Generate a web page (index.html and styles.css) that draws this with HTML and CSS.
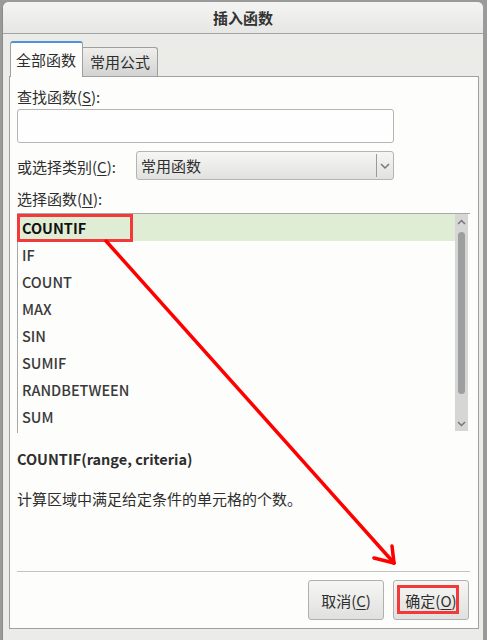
FILE: index.html
```html
<!DOCTYPE html>
<html>
<head>
<meta charset="utf-8">
<link rel="stylesheet" href="styles.css">
</head>
<body>
<div class="dialog">
  <div class="titlebar">插入函数</div>
  <div class="body">
    <div class="tabs">
      <div class="tab active">全部函数</div>
      <div class="tab">常用公式</div>
    </div>
    <div class="panel">
      <div class="label">查找函数(<u>S</u>):</div>
      <div class="input"></div>
      <div class="catrow">
        <div class="label">或选择类别(<u>C</u>):</div>
        <div class="select">
          <span class="seltext">常用函数</span>
          <span class="selbtn">
            <svg width="12" height="8" viewBox="0 0 12 8"><path d="M2 2 L6 6 L10 2" fill="none" stroke="#777" stroke-width="1.5"/></svg>
          </span>
        </div>
      </div>
      <div class="label lab3">选择函数(<u>N</u>):</div>
      <div class="list">
        <div class="rows">
          <div class="row sel">COUNTIF</div>
          <div class="row">IF</div>
          <div class="row">COUNT</div>
          <div class="row">MAX</div>
          <div class="row">SIN</div>
          <div class="row">SUMIF</div>
          <div class="row">RANDBETWEEN</div>
          <div class="row">SUM</div>
        </div>
        <div class="scroll">
          <svg class="sarrow" width="9" height="6" viewBox="0 0 9 6"><path d="M1 5 L4.5 1.5 L8 5" fill="none" stroke="#777" stroke-width="1.5"/></svg>
          <div class="thumb"></div>
          <svg class="sarrow" width="9" height="6" viewBox="0 0 9 6"><path d="M1 1 L4.5 4.5 L8 1" fill="none" stroke="#777" stroke-width="1.5"/></svg>
        </div>
      </div>
      <div class="formula">COUNTIF(range, criteria)</div>
      <div class="desc">计算区域中满足给定条件的单元格的个数。</div>
      <div class="footer">
        <div class="btn">取消(<u>C</u>)</div>
        <div class="btn">确定(<u>O</u>)</div>
      </div>
    </div>
  </div>
</div>
<div class="mark mark1"></div>
<div class="mark mark2"></div>
<svg class="arrow" width="487" height="640" viewBox="0 0 487 640">
  <g stroke="#ff0000" stroke-width="3.5" stroke-linecap="round" fill="none">
    <path d="M106 241 L394 563"/>
    <path d="M374 558 L394 563"/>
    <path d="M392 546 L394 563"/>
  </g>
</svg>
</body>
</html>
```
FILE: styles.css
```css
html, body {
  margin: 0;
  padding: 0;
}
body {
  width: 487px;
  height: 640px;
  background: #9a9a9a;
  position: relative;
  overflow: hidden;
  font-family: "Noto Sans CJK SC", "Noto Sans", sans-serif;
  font-size: 15px;
  color: #2e2e2e;
}
.dialog {
  margin: 2px 3px 0 2px;
  height: 638px;
  background: #ebece8;
  border-radius: 6px 6px 0 0;
  border-left: 1px solid #8a8a8a;
  border-right: 1px solid #9c9c9c;
  box-sizing: border-box;
}
.titlebar {
  height: 31px;
  line-height: 31px;
  text-align: center;
  font-weight: bold;
  font-size: 15px;
  color: #333;
  background: linear-gradient(#f4f5f3, #e6e7e4);
  border-bottom: 1px solid #a4a4a4;
  border-radius: 6px 6px 0 0;
}
.body {
  padding: 7px 6px 0 6px;
}
.tabs {
  display: flex;
  align-items: flex-end;
  height: 35px;
  padding-left: 1px;
}
.tab {
  box-sizing: border-box;
  font-size: 15px;
  color: #2e2e2e;
}
.tab.active {
  width: 73px;
  height: 36px;
  margin-bottom: -1px;
  background: #fdfdfb;
  border: 1px solid #a0a0a0;
  border-top: 2px solid #4e92d8;
  border-bottom: none;
  border-radius: 3px 3px 0 0;
  padding: 6px 0 0 5px;
  position: relative;
  z-index: 2;
}
.tab:not(.active) {
  width: 75px;
  height: 29px;
  background: linear-gradient(#eeeeec, #d3d4d2);
  border: 1px solid #a0a0a0;
  border-bottom: none;
  border-left: none;
  border-radius: 0 3px 0 0;
  padding: 3px 0 0 7px;
}
.panel {
  box-sizing: border-box;
  width: 470px;
  height: 553px;
  background: #fdfdfb;
  border: 1px solid #a0a0a0;
  padding: 10px 7px 8px 7px;
  display: flex;
  flex-direction: column;
}
.label {
  height: 20px;
  line-height: 20px;
}
u {
  text-decoration-thickness: 1px;
  text-underline-offset: 2px;
}
.input {
  margin-top: 2px;
  width: 377px;
  height: 34px;
  box-sizing: border-box;
  border: 1px solid #b4b4b2;
  border-radius: 3px;
  background: #fefefe;
}
.catrow {
  margin-top: 8px;
  display: flex;
  align-items: center;
  height: 29px;
}
.catrow .label {
  width: 119px;
  margin-top: 2px;
}
.select {
  box-sizing: border-box;
  width: 258px;
  height: 29px;
  border: 1px solid #b4b4b2;
  border-radius: 3px;
  background: linear-gradient(#f6f6f4, #e1e2e0);
  display: flex;
  align-items: center;
}
.seltext {
  flex: 1;
  padding-left: 4px;
}
.selbtn {
  width: 16px;
  height: 23px;
  border-left: 1px solid #9a9a9a;
  display: flex;
  align-items: center;
  justify-content: center;
}
.lab3 {
  margin-top: 9px;
}
.list {
  margin-top: 4px;
  width: 453px;
  height: 220px;
  box-sizing: border-box;
  border-top: 1px solid #a8a8a8;
  border-left: 1px solid #a8a8a8;
  display: flex;
}
.rows {
  flex: 1;
}
.row {
  height: 27px;
  line-height: 27px;
  padding-left: 4px;
  font-size: 14.5px;
  font-weight: 500;
  color: #3a3a3a;
}
.row.sel {
  background: #deedd4;
  color: #111;
  font-weight: bold;
}
.scroll {
  width: 13px;
  margin-right: 2px;
  height: 217px;
  background: #d6d7d5;
  display: flex;
  flex-direction: column;
  align-items: center;
  justify-content: space-between;
  padding: 5px 0 4px;
  box-sizing: border-box;
}
.thumb {
  width: 7px;
  height: 162px;
  background: #9c9ea0;
  border-radius: 4px;
  margin-top: 3px;
  margin-bottom: 24px;
}
.formula {
  margin-top: 16px;
  height: 20px;
  line-height: 20px;
  font-weight: bold;
  font-size: 14.5px;
  color: #2e2e2e;
}
.desc {
  margin-top: 20px;
  height: 20px;
  line-height: 20px;
}
.footer {
  margin-top: auto;
  border-top: 1px solid #c3c3c3;
  padding: 8px 1px 0 0;
  display: flex;
  justify-content: flex-end;
  gap: 9px;
  width: 453px;
  box-sizing: border-box;
}
.btn {
  box-sizing: border-box;
  width: 76px;
  height: 40px;
  border: 1px solid #b0b0ae;
  border-radius: 3px;
  background: linear-gradient(#f6f6f4, #e0e1df);
  display: flex;
  align-items: center;
  justify-content: center;
  color: #2e2e2e;
}
.mark {
  position: absolute;
  border: 3px solid #f23a3a;
  box-sizing: border-box;
}
.mark1 {
  left: 17px;
  top: 214px;
  width: 116px;
  height: 28px;
}
.mark2 {
  left: 397px;
  top: 585px;
  width: 62px;
  height: 29px;
}
.arrow {
  position: absolute;
  left: 0;
  top: 0;
  pointer-events: none;
}
```
